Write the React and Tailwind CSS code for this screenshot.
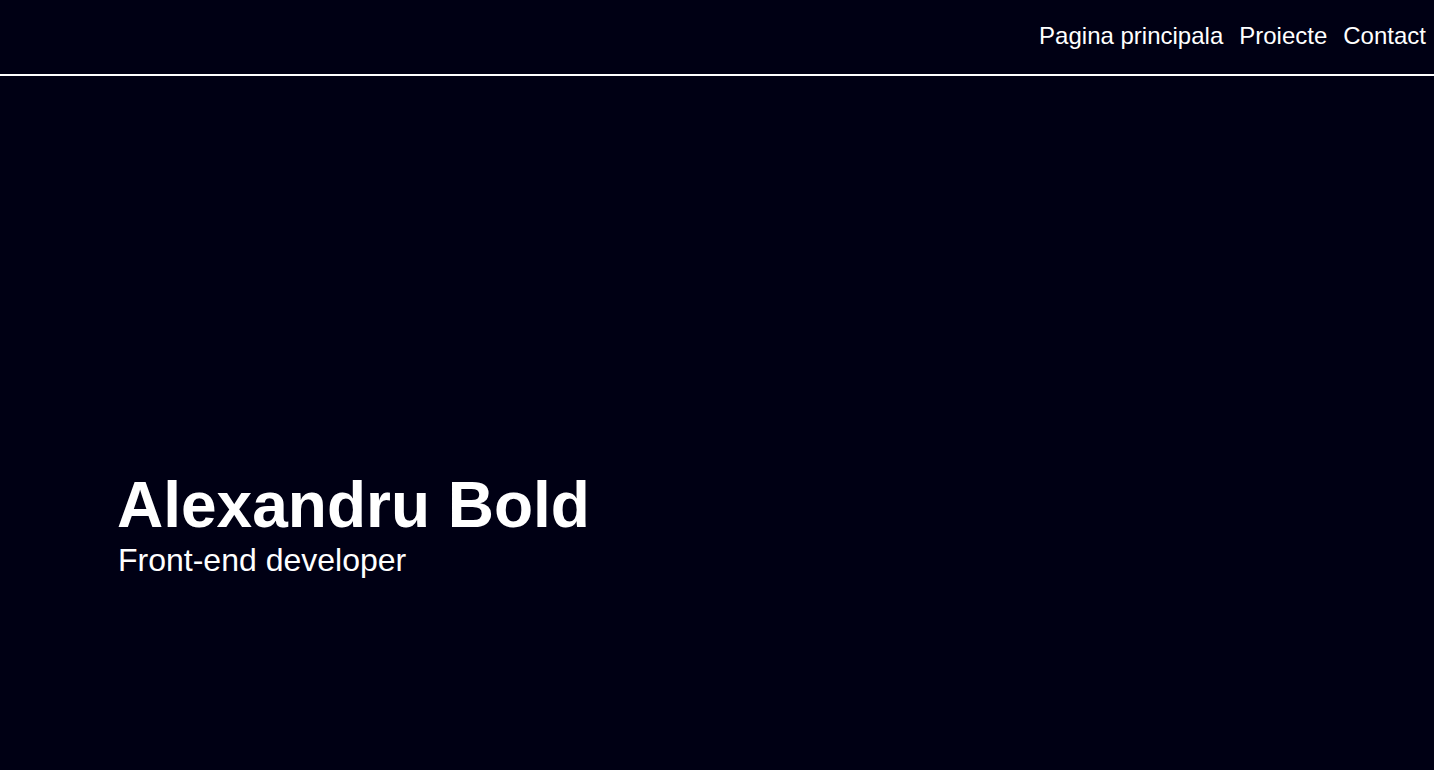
export default function App() {
  return (
    <div className="min-h-screen w-full bg-[#000014] text-white font-['Liberation_Sans',Arial,sans-serif]">
      {/* Top navigation */}
      <header className="h-[76px] border-b-2 border-white flex items-center justify-end pr-2 pb-[2px]">
        <nav className="flex items-center gap-4 text-[24px] leading-[normal]">
          <a href="#" className="hover:underline">Pagina principala</a>
          <a href="#" className="hover:underline">Proiecte</a>
          <a href="#" className="hover:underline">Contact</a>
        </nav>
      </header>

      {/* Hero */}
      <section className="pt-[392px] pl-[117px]">
        <h1 className="text-[64px] font-bold leading-[normal]">Alexandru Bold</h1>
        <p className="text-[32px] leading-[normal] pl-[1px]">Front-end developer</p>
      </section>
    </div>
  );
}
